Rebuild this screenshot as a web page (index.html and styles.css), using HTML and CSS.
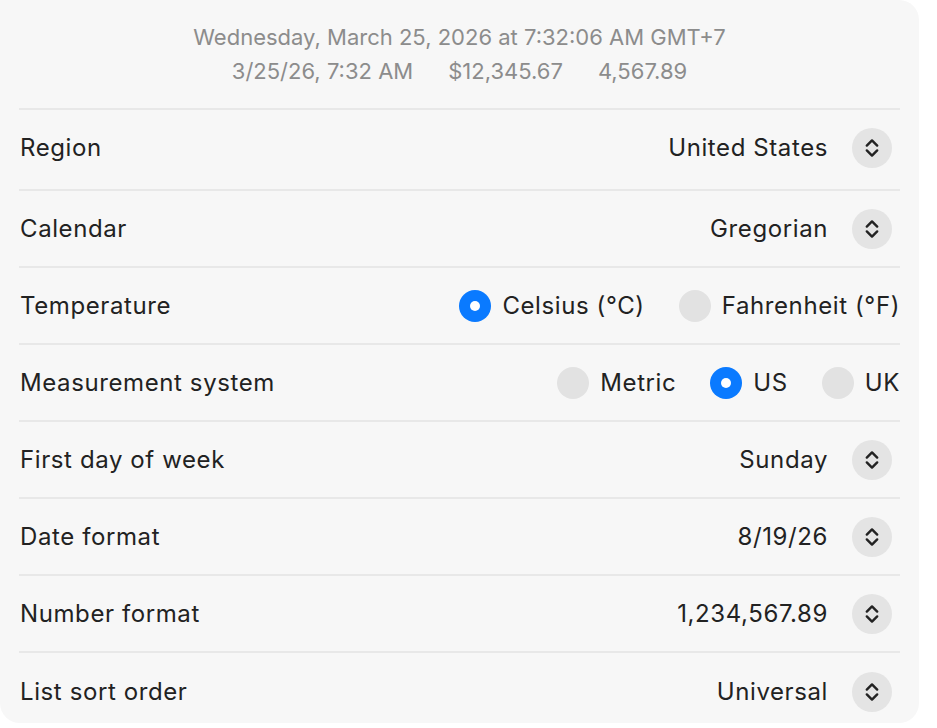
FILE: index.html
```html
<!DOCTYPE html>
<html lang="en">
<head>
<meta charset="utf-8">
<title>Language & Region</title>
<link rel="stylesheet" href="styles.css">
</head>
<body>
<div class="card">
  <div class="preview">
    <div class="preview-line">Wednesday, March 25, 2026 at 7:32:06 AM GMT+7</div>
    <div class="preview-line preview-samples">
      <span>3/25/26, 7:32 AM</span><span>$12,345.67</span><span>4,567.89</span>
    </div>
  </div>
  <div class="rows">
    <div class="row row-first">
      <span class="label">Region</span>
      <div class="control"><span class="value">United States</span><span class="stepper"><svg viewBox="0 0 16 22" width="16" height="22"><path d="M2.8 8.6 L8 3.4 L13.2 8.6 M2.8 13.4 L8 18.6 L13.2 13.4"/></svg></span></div>
    </div>
    <div class="row">
      <span class="label">Calendar</span>
      <div class="control"><span class="value">Gregorian</span><span class="stepper"><svg viewBox="0 0 16 22" width="16" height="22"><path d="M2.8 8.6 L8 3.4 L13.2 8.6 M2.8 13.4 L8 18.6 L13.2 13.4"/></svg></span></div>
    </div>
    <div class="row">
      <span class="label">Temperature</span>
      <div class="radios">
        <span class="radio"><span class="dot on"></span>Celsius (°C)</span>
        <span class="radio"><span class="dot"></span>Fahrenheit (°F)</span>
      </div>
    </div>
    <div class="row">
      <span class="label">Measurement system</span>
      <div class="radios">
        <span class="radio"><span class="dot"></span>Metric</span>
        <span class="radio"><span class="dot on"></span>US</span>
        <span class="radio"><span class="dot"></span>UK</span>
      </div>
    </div>
    <div class="row">
      <span class="label">First day of week</span>
      <div class="control"><span class="value">Sunday</span><span class="stepper"><svg viewBox="0 0 16 22" width="16" height="22"><path d="M2.8 8.6 L8 3.4 L13.2 8.6 M2.8 13.4 L8 18.6 L13.2 13.4"/></svg></span></div>
    </div>
    <div class="row">
      <span class="label">Date format</span>
      <div class="control"><span class="value">8/19/26</span><span class="stepper"><svg viewBox="0 0 16 22" width="16" height="22"><path d="M2.8 8.6 L8 3.4 L13.2 8.6 M2.8 13.4 L8 18.6 L13.2 13.4"/></svg></span></div>
    </div>
    <div class="row">
      <span class="label">Number format</span>
      <div class="control"><span class="value">1,234,567.89</span><span class="stepper"><svg viewBox="0 0 16 22" width="16" height="22"><path d="M2.8 8.6 L8 3.4 L13.2 8.6 M2.8 13.4 L8 18.6 L13.2 13.4"/></svg></span></div>
    </div>
    <div class="row">
      <span class="label">List sort order</span>
      <div class="control"><span class="value">Universal</span><span class="stepper"><svg viewBox="0 0 16 22" width="16" height="22"><path d="M2.8 8.6 L8 3.4 L13.2 8.6 M2.8 13.4 L8 18.6 L13.2 13.4"/></svg></span></div>
    </div>
  </div>
</div>
</body>
</html>
```
FILE: styles.css
```css
* { box-sizing: border-box; }
html, body { margin: 0; padding: 0; background: #ffffff; }
body {
  font-family: Inter, "Noto Sans", "Liberation Sans", sans-serif;
  color: #222222;
  width: 937px;
  height: 728px;
  overflow: hidden;
}
.card {
  width: 919px;
  height: 723px;
  background: #f7f7f7;
  border-radius: 0 20px 20px 20px;
  padding: 0 19px 0 19px;
}
.preview {
  height: 110px;
  border-bottom: 2px solid #e8e8e8;
  display: flex;
  flex-direction: column;
  align-items: center;
  padding-top: 23px;
  gap: 6px;
  color: #8c8c8c;
  font-size: 22px;
  letter-spacing: 0;
}
.preview-line { line-height: 28px; }
.preview-samples { display: flex; gap: 35px; }
.rows { display: flex; flex-direction: column; }
.row {
  height: 77px;
  display: flex;
  align-items: center;
  justify-content: space-between;
  border-bottom: 2px solid #e8e8e8;
  font-size: 24px;
  letter-spacing: 0.6px;
  padding-left: 1px;
}
.row-first { height: 81px; padding-bottom: 4px; }
.row:last-child { border-bottom: none; }
.label { color: #222222; }
.control { display: flex; align-items: center; gap: 24px; padding-right: 8px; }
.value { color: #222222; }
.stepper {
  width: 40px;
  height: 40px;
  border-radius: 50%;
  background: #e4e4e4;
  display: flex;
  align-items: center;
  justify-content: center;
}
.stepper svg path {
  fill: none;
  stroke: #222222;
  stroke-width: 2.4;
  stroke-linecap: round;
  stroke-linejoin: round;
}
.radios { display: flex; align-items: center; gap: 34px; }
.radio { display: flex; align-items: center; gap: 11px; }
.dot {
  width: 32px;
  height: 32px;
  border-radius: 50%;
  background: #e2e2e2;
  display: inline-block;
  position: relative;
}
.dot.on { background: #0a7aff; }
.dot.on::after {
  content: "";
  position: absolute;
  left: 11px;
  top: 11px;
  width: 10px;
  height: 10px;
  border-radius: 50%;
  background: #ffffff;
}
```
